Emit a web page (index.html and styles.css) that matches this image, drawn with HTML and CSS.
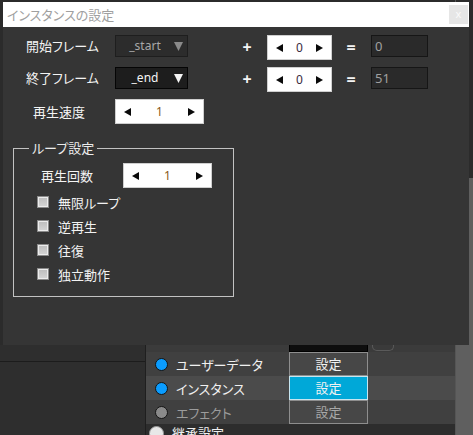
FILE: index.html
```html
<!DOCTYPE html>
<html lang="ja">
<head>
    <meta charset="UTF-8">
    <title>インスタンスの設定</title>
    <link rel="stylesheet" href="styles.css">
</head>
<body>
    <!-- Background application -->
    <div class="app">
        <div class="app-main">
            <div class="app-top"></div>
            <div class="app-bottom">
                <div class="side-panel">
                    <div class="side-head"></div>
                </div>
                <div class="list-panel">
                    <div class="list-row list-row-cut">
                        <span class="combo-stub"></span>
                        <span class="pill-stub"></span>
                    </div>
                    <div class="list-row">
                        <span class="dot dot-on"></span>
                        <span class="row-label">ユーザーデータ</span>
                        <span class="set-btn">設定</span>
                    </div>
                    <div class="list-row list-row-alt">
                        <span class="dot dot-on"></span>
                        <span class="row-label">インスタンス</span>
                        <span class="set-btn active">設定</span>
                    </div>
                    <div class="list-row">
                        <span class="dot dot-off"></span>
                        <span class="row-label muted">エフェクト</span>
                        <span class="set-btn muted">設定</span>
                    </div>
                    <div class="list-foot">
                        <span class="dot dot-white"></span>
                        <span class="row-label">継承設定</span>
                    </div>
                </div>
            </div>
        </div>
        <div class="app-scroll">
            <div class="app-scroll-head"></div>
        </div>
    </div>

    <!-- Dialog -->
    <div class="dialog">
        <div class="dialog-title">
            <span class="title-text">インスタンスの設定</span>
            <span class="close-btn">x</span>
        </div>
        <div class="dialog-body">
            <div class="field-row frame-row">
                <span class="field-label">開始フレーム</span>
                <div class="combo combo-dim">
                    <span class="combo-text">_start</span>
                    <svg class="combo-arrow" width="9" height="9" viewBox="0 0 9 9"><polygon points="0,0 9,0 4.5,9"/></svg>
                </div>
                <span class="op op-plus">+</span>
                <div class="spin spin-small">
                    <svg width="7" height="8" viewBox="0 0 7 8"><polygon points="7,0 7,8 0,4"/></svg>
                    <span class="spin-value">0</span>
                    <svg width="7" height="8" viewBox="0 0 7 8"><polygon points="0,0 0,8 7,4"/></svg>
                </div>
                <span class="op op-eq">=</span>
                <div class="result">0</div>
            </div>

            <div class="field-row frame-row">
                <span class="field-label">終了フレーム</span>
                <div class="combo">
                    <span class="combo-text">_end</span>
                    <svg class="combo-arrow" width="9" height="9" viewBox="0 0 9 9"><polygon points="0,0 9,0 4.5,9"/></svg>
                </div>
                <span class="op op-plus">+</span>
                <div class="spin spin-small">
                    <svg width="7" height="8" viewBox="0 0 7 8"><polygon points="7,0 7,8 0,4"/></svg>
                    <span class="spin-value">0</span>
                    <svg width="7" height="8" viewBox="0 0 7 8"><polygon points="0,0 0,8 7,4"/></svg>
                </div>
                <span class="op op-eq">=</span>
                <div class="result">51</div>
            </div>

            <div class="field-row speed-row">
                <span class="field-label">再生速度</span>
                <div class="spin">
                    <svg width="7" height="8" viewBox="0 0 7 8"><polygon points="7,0 7,8 0,4"/></svg>
                    <span class="spin-value">1</span>
                    <svg width="7" height="8" viewBox="0 0 7 8"><polygon points="0,0 0,8 7,4"/></svg>
                </div>
            </div>

            <fieldset class="loop-group">
                <legend>ループ設定</legend>
                <div class="field-row count-row">
                    <span class="field-label">再生回数</span>
                    <div class="spin">
                        <svg width="7" height="8" viewBox="0 0 7 8"><polygon points="7,0 7,8 0,4"/></svg>
                        <span class="spin-value">1</span>
                        <svg width="7" height="8" viewBox="0 0 7 8"><polygon points="0,0 0,8 7,4"/></svg>
                    </div>
                </div>
                <div class="check-list">
                    <label class="check-row"><span class="check-box"></span>無限ループ</label>
                    <label class="check-row"><span class="check-box"></span>逆再生</label>
                    <label class="check-row"><span class="check-box"></span>往復</label>
                    <label class="check-row"><span class="check-box"></span>独立動作</label>
                </div>
            </fieldset>
        </div>
    </div>
</body>
</html>
```

FILE: styles.css
```css
* {
    margin: 0;
    padding: 0;
    box-sizing: border-box;
}

body {
    width: 473px;
    height: 435px;
    overflow: hidden;
    background-color: #2b2b2b;
    color: #f2f2f2;
    font-family: "Noto Sans CJK JP", "Noto Sans", sans-serif;
    font-size: 13px;
    font-feature-settings: "palt";
    position: relative;
}

/* Background application */
.app {
    display: flex;
    height: 435px;
}

.app-main {
    flex: 1;
    display: flex;
    flex-direction: column;
    min-height: 0;
}

.app-top {
    height: 345px;
    flex-shrink: 0;
    background-color: #2b2b2b;
}

.app-bottom {
    flex: 1;
    display: flex;
    min-height: 0;
    overflow: hidden;
}

.side-panel {
    width: 146px;
    flex-shrink: 0;
    background-color: #2e2e2e;
    border-right: 1px solid #1f1f1f;
}

.side-head {
    height: 17px;
    border-bottom: 1px solid #1c1c1c;
}

.list-panel {
    flex: 1;
    background-color: #3c3c3c;
}

.list-row {
    display: flex;
    align-items: center;
    height: 24px;
    padding-left: 9px;
    background-color: #404040;
}

.list-row-alt {
    background-color: #4b4b4b;
}

.list-row-cut {
    height: 7px;
    align-items: flex-end;
    padding-left: 143px;
    background-color: #3b3b3b;
}

.combo-stub {
    width: 79px;
    height: 7px;
    background-color: #0e0e0e;
    border: 1px solid #000;
    border-top: none;
}

.pill-stub {
    width: 22px;
    height: 6px;
    margin-left: 4px;
    margin-bottom: 1px;
    border: 1px solid #5a5a5a;
    border-top: none;
    border-radius: 0 0 5px 5px;
    background-color: #3a3a3a;
}

.dot {
    width: 13px;
    height: 13px;
    border-radius: 50%;
    border: 1px solid #141414;
    flex-shrink: 0;
}

.dot-on {
    background-color: #0a9cff;
}

.dot-off {
    background-color: #8a8a8a;
}

.dot-white {
    background-color: #e8e8e8;
    border-color: #9a9a9a;
}

.row-label {
    width: 113px;
    margin-left: 8px;
    color: #f0f0f0;
}

.row-label.muted {
    color: #9c9c9c;
}

.set-btn {
    width: 79px;
    height: 24px;
    line-height: 22px;
    text-align: center;
    border: 1px solid #8e8e8e;
    background-color: #474747;
    color: #f2f2f2;
}

.set-btn.active {
    background-color: #00a8d8;
    border-color: #c7e6f0;
}

.set-btn.muted {
    color: #a8a8a8;
}

.list-foot {
    display: flex;
    align-items: flex-start;
    height: 24px;
    padding-left: 3px;
    background-color: #2d2d2d;
}

.list-foot .dot {
    width: 15px;
    height: 15px;
    margin-top: 2px;
}

.list-foot .row-label {
    margin-left: 8px;
    line-height: 18px;
}

.app-scroll {
    width: 18px;
    flex-shrink: 0;
    background-color: #5f5f5f;
    border-left: 1px solid #555;
}

.app-scroll-head {
    height: 178px;
    background-color: #2b2b2b;
}

/* Dialog */
.dialog {
    position: absolute;
    left: 3px;
    top: 2px;
    width: 466px;
    height: 343px;
    background-color: #353535;
}

.dialog-title {
    height: 25px;
    background-color: #ffffff;
    display: flex;
    align-items: center;
    justify-content: space-between;
    padding: 0 1px 0 4px;
}

.title-text {
    color: #a0a0a0;
    font-size: 13px;
}

.close-btn {
    width: 19px;
    height: 19px;
    background-color: #e6e6e6;
    color: #fafafa;
    font-family: "Noto Sans", sans-serif;
    font-size: 11px;
    line-height: 18px;
    text-align: center;
}

.dialog-body {
    padding-top: 8px;
}

.field-row {
    display: flex;
    align-items: flex-start;
    height: 25px;
}

.frame-row {
    padding-left: 23px;
    margin-bottom: 7px;
}

.frame-row .field-label {
    width: 89px;
}

.field-label {
    line-height: 22px;
    color: #f4f4f4;
}

.combo {
    width: 73px;
    height: 22px;
    display: flex;
    align-items: center;
    background-color: #1d1d1d;
    border: 1px solid #050505;
    color: #f4f4f4;
    fill: #f4f4f4;
}

.combo-dim {
    background-color: #2c2c2c;
    border-color: #1e1e1e;
    color: #a8a8a8;
    fill: #8a8a8a;
}

.combo-text {
    flex: 1;
    text-align: center;
    font-family: "Noto Sans", sans-serif;
    font-size: 12px;
    line-height: 20px;
}

.combo-arrow {
    margin-right: 4px;
}

.op {
    width: 20px;
    height: 25px;
    line-height: 25px;
    text-align: center;
    font-family: "Noto Sans", sans-serif;
    font-size: 16px;
    font-weight: bold;
    color: #f4f4f4;
}

.op-plus {
    margin-left: 49px;
}

.op-eq {
    margin-left: 9px;
}

.spin {
    width: 89px;
    height: 25px;
    display: flex;
    align-items: center;
    justify-content: space-between;
    padding: 0 8px;
    background-color: #ffffff;
    border: 1px solid #cfcfcf;
    fill: #0a0a0a;
}

.spin-small {
    width: 65px;
    margin-left: 10px;
}

.spin-value {
    font-family: "Noto Sans", sans-serif;
    font-size: 12px;
    color: #8a5a20;
}

.spin-small .spin-value {
    color: #3a2a40;
}

.result {
    width: 57px;
    height: 22px;
    margin-left: 10px;
    padding-left: 3px;
    background-color: #2a2a2a;
    border: 1px solid #161616;
    color: #a0a0a0;
    font-family: "Noto Sans", sans-serif;
    font-size: 13px;
    line-height: 20px;
}

.speed-row {
    padding-left: 30px;
}

.speed-row .field-label,
.count-row .field-label {
    width: 82px;
    line-height: 25px;
}

/* Loop group */
.loop-group {
    width: 221px;
    margin: 16px 0 0 10px;
    padding: 0 0 10px 0;
    border: 1px solid #c2c2c2;
}

.loop-group legend {
    margin-left: 15px;
    padding: 0 3px;
    line-height: 16px;
    color: #ececec;
}

.count-row {
    margin-top: 7px;
    padding-left: 27px;
}

.check-list {
    margin-top: 2px;
}

.check-row {
    display: flex;
    align-items: center;
    height: 24px;
    padding-left: 23px;
    color: #f2f2f2;
}

.check-box {
    width: 12px;
    height: 12px;
    margin-right: 9px;
    border: 1px solid #8a8a8a;
    background: linear-gradient(#bdbdbd, #d6d6d6);
    box-shadow: inset 0 0 0 1px #ececec;
}
```
